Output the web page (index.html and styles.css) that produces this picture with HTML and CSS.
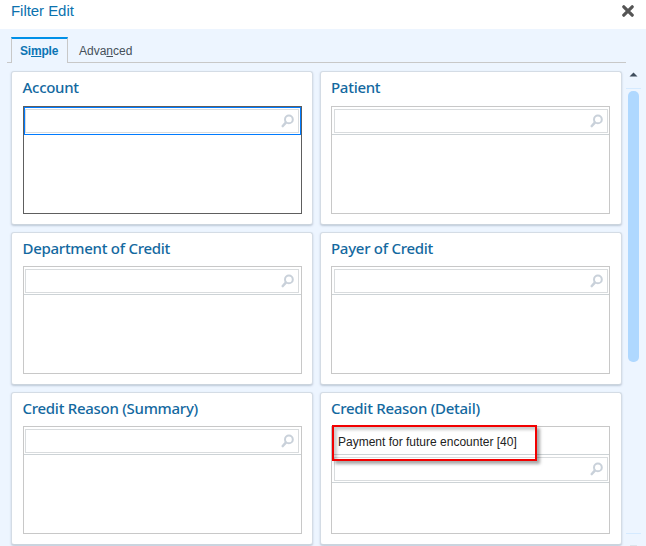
FILE: index.html
```html
<!DOCTYPE html>
<html lang="en">
<head>
<meta charset="utf-8">
<title>Filter Edit</title>
<link rel="stylesheet" href="styles.css">
</head>
<body>
<svg class="defs" width="0" height="0"><symbol id="mag" viewBox="0 0 13 14"><circle cx="7.9" cy="5.4" r="3.9" fill="none" stroke="#c9d1da" stroke-width="2"/><path d="M4.8 8.7 1.8 12" fill="none" stroke="#c9d1da" stroke-width="2.6" stroke-linecap="round"/></symbol></svg>
<header class="titlebar">
  <h1>Filter Edit</h1>
  <svg class="close" width="12" height="12" viewBox="0 0 12 12"><path d="M1.8 1.8 10.2 10.2M10.2 1.8 1.8 10.2" stroke="#555" stroke-width="3.2" stroke-linecap="round"/></svg>
</header>
<nav class="tabs">
  <span class="tab active">Si<u>m</u>ple</span>
  <span class="tab">Adva<u>n</u>ced</span>
</nav>
<div class="body">
  <main class="grid">
    <section class="card first"><h2>Account</h2><div class="list focus"><div class="entry"><div class="input"><svg><use href="#mag"/></svg></div></div></div></section>
    <section class="card first"><h2>Patient</h2><div class="list"><div class="entry"><div class="input"><svg><use href="#mag"/></svg></div></div></div></section>
    <section class="card"><h2>Department of Credit</h2><div class="list"><div class="entry"><div class="input"><svg><use href="#mag"/></svg></div></div></div></section>
    <section class="card"><h2>Payer of Credit</h2><div class="list"><div class="entry"><div class="input"><svg><use href="#mag"/></svg></div></div></div></section>
    <section class="card"><h2>Credit Reason (Summary)</h2><div class="list"><div class="entry"><div class="input"><svg><use href="#mag"/></svg></div></div></div></section>
    <section class="card"><h2>Credit Reason (Detail)</h2><div class="list"><div class="value"><span>Payment for future encounter [40]</span></div><div class="entry"><div class="input"><svg><use href="#mag"/></svg></div></div><div class="highlight"></div></div></section>
  </main>
  <aside class="scroll">
    <svg class="arrow" width="9" height="5" viewBox="0 0 9 5"><path d="M0.5 4.5 4.5 0.5 8.5 4.5Z" fill="#3f4d5c"/></svg>
    <div class="track"><div class="thumb"></div></div>
    <div class="stub"></div>
  </aside>
</div>
</body>
</html>
```
FILE: styles.css
```css
* { box-sizing: border-box; }
body {
  margin: 0;
  width: 646px;
  height: 546px;
  overflow: hidden;
  background: #edf5ff;
  font-family: "Liberation Sans", Arial, sans-serif;
}
.defs { position: absolute; }
.titlebar {
  height: 29px;
  background: #fff;
  display: flex;
  justify-content: space-between;
  padding: 2px 12px 0 11px;
}
h1 {
  margin: 0;
  font-size: 15px;
  line-height: 18px;
  font-weight: 400;
  letter-spacing: -0.05px;
  color: #0c72ae;
}
.close { margin-top: 3px; }
.tabs {
  display: flex;
  height: 34px;
  margin: 0 20px 0 7px;
  padding: 8px 0 0 4px;
  border-bottom: 1px solid #c8c8c8;
}
.tab {
  height: 26px;
  padding: 0 11px;
  font-size: 12px;
  line-height: 28px;
  color: #45505a;
}
.tab.active {
  width: 57px;
  padding: 0 0 0 8px;
  border: 1px solid #c8c8c8;
  border-top: 2px solid #0090e8;
  border-bottom: 0;
  background: #edf5ff;
  font-weight: 700;
  line-height: 24px;
  letter-spacing: -0.2px;
  color: #0b74b4;
}
.body { display: flex; padding-left: 11px; }
.grid {
  display: grid;
  grid-template-columns: 302px 302px;
  grid-template-rows: 154px 153px 153px;
  column-gap: 7px;
  row-gap: 7px;
  margin-top: 8px;
}
.card {
  display: flex;
  flex-direction: column;
  justify-content: flex-end;
  padding: 0 10px 10px 11px;
  border: 1px solid #d4dce5;
  border-bottom-color: #cbd4dd;
  border-radius: 3px;
  background: #fff;
  box-shadow: 0 1px 2px rgba(100, 120, 140, 0.35);
}
.card:nth-child(even) { padding-left: 10px; }
h2 {
  margin: 0 0 7px -0.5px;
  height: 22px;
  font: 500 15px/22px "Noto Sans", sans-serif;
  letter-spacing: -0.28px;
  color: #14699f;
  white-space: nowrap;
}
.first h2 { margin-bottom: 8px; }
.card:nth-child(even) h2 { margin-left: 0; }
.list {
  position: relative;
  width: 279px;
  height: 108px;
  border: 1px solid #c8c8c8;
}
.entry {
  height: 28px;
  padding: 2px 2px 1px 1px;
  border-bottom: 1px solid #cdd3d6;
}
.card:nth-child(even) .entry { padding: 2px 1px 1px 2px; }
.input {
  display: flex;
  justify-content: flex-end;
  height: 24px;
  padding: 4px 4px 0 0;
  border: 1px solid #d9dcde;
}
.input svg { width: 13px; height: 14px; }
.focus { border-color: #5e5e5e; }
.focus .entry {
  border: 1px solid #007bff;
  padding: 1px 1px 1px 0;
}
.value {
  height: 28px;
  padding-left: 6px;
  border-bottom: 1px solid #cdd3d6;
  font-size: 12px;
  line-height: 30px;
  color: #222;
}
.highlight {
  position: absolute;
  left: 0;
  top: -2px;
  width: 205px;
  height: 36px;
  border: 2px solid #f20000;
  box-shadow: 3px 3px 3px rgba(0, 0, 0, 0.35), inset 3px 3px 3px rgba(0, 0, 0, 0.2);
}
.scroll {
  display: flex;
  flex-direction: column;
  align-items: center;
  width: 15px;
  margin-left: 4px;
  padding-top: 9px;
}
.arrow { display: block; margin-bottom: 11px; }
.track {
  width: 15px;
  height: 446px;
  padding: 2px 2px 0;
  border-top: 1px solid #d5eaff;
  border-bottom: 1px solid #d5eaff;
}
.thumb {
  width: 11px;
  height: 271px;
  border-radius: 5px;
  background: #afd8ff;
}
.stub { width: 7px; height: 1px; margin-top: 11px; background: #dce4eb; }
```
